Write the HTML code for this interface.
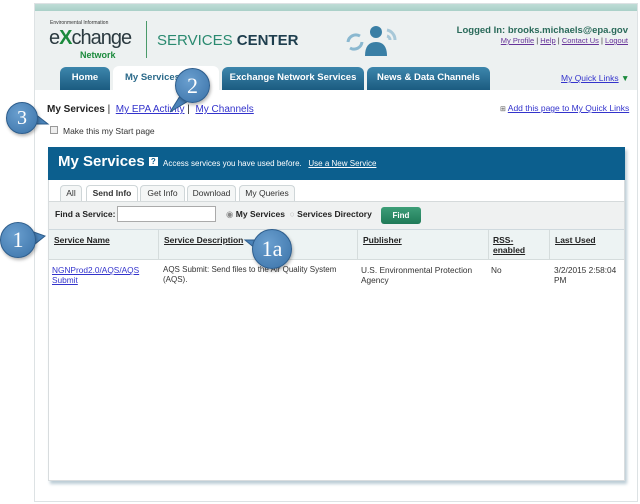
<!DOCTYPE html>
<html><head><style>
*{margin:0;padding:0;box-sizing:border-box}
body{width:640px;height:504px;background:#fff;font-family:"Liberation Sans",Arial,sans-serif;position:relative;overflow:hidden}
.abs{position:absolute}
a{color:#3333cc;text-decoration:underline}
.tab{position:absolute;top:67px;height:23px;border-radius:6px 6px 0 0;background:linear-gradient(#3d86ac,#1b5b80);color:#fff;font-weight:bold;font-size:9.5px;text-align:center;line-height:22px}
.st{position:absolute;top:185px;height:16px;border:1px solid #cfd6d8;border-bottom:none;border-radius:4px 4px 0 0;background:#f4f6f6;font-size:8.5px;text-align:center;line-height:15px;color:#333}
.th{position:absolute;top:235px;font-size:8.5px;font-weight:bold;color:#222;text-decoration:underline}
.td{position:absolute;top:265px;font-size:8.3px;color:#333;line-height:10px;white-space:nowrap}
.call{position:absolute;border-radius:50%;background:radial-gradient(circle at 40% 35%,#6a9fcf,#3a72a8);border:1.5px solid #2d5d8c;color:#fff;font-family:"Liberation Serif",serif;text-align:center;box-shadow:1px 2px 3px rgba(0,0,0,.3)}
</style></head><body>
<div class="abs" style="left:34px;top:3px;width:604px;height:499px;border:1px solid #dde2e4"></div>
<div class="abs" style="left:35px;top:4px;width:602px;height:7px;background:linear-gradient(#bfdcd6,#a9d0c8)"></div>
<div class="abs" style="left:35px;top:11px;width:602px;height:79px;background:#edf1f1"></div>
<div class="abs" style="left:50px;top:20px;font-size:5px;color:#333">Environmental Information</div>
<div class="abs" style="left:49px;top:27px;font-size:20px;color:#2b3a40;letter-spacing:-1px">e<span style="color:#1b8a3c;font-weight:bold">X</span>change</div>
<div class="abs" style="left:80px;top:50px;font-size:9px;font-weight:bold;color:#1b8a3c">Network</div>
<div class="abs" style="left:146px;top:21px;width:1px;height:37px;background:#4a9a6a"></div>
<div class="abs" style="left:157px;top:32px;font-size:15px;color:#2a8a70">SERVICES <b style="color:#1e3e4e">CENTER</b></div>
<svg class="abs" style="left:340px;top:22px" width="60" height="36"><path d="M8 20a8 8 0 0 1 12-6M22 20a8 8 0 0 1-12 6" stroke="#8ab8d0" stroke-width="3" fill="none"/><circle cx="36" cy="10" r="6" fill="#3a7fa5"/><path d="M25 34q0-14 11-14t11 14z" fill="#3a7fa5"/><path d="M47 8a10 10 0 0 1 8 10M47 14a4 4 0 0 1 3 4" stroke="#a8c8d8" stroke-width="3" fill="none"/></svg>
<div class="abs" style="right:12px;top:25px;font-size:9.5px;font-weight:bold;color:#2a6a5a">Logged In: brooks.michaels@epa.gov</div>
<div class="abs" style="right:12px;top:36px;font-size:7.5px;color:#333"><a style="color:#663399">My Profile</a> | <a style="color:#663399">Help</a> | <a style="color:#663399">Contact Us</a> | <a style="color:#663399">Logout</a></div>
<div class="tab" style="left:60px;width:50px">Home</div>
<div class="abs" style="left:113px;top:66px;width:106px;height:25px;background:#fff;border-radius:6px 6px 0 0;font-size:9.5px;font-weight:bold;color:#2b6a8a;padding:6px 0 0 12px">My Services</div>
<div class="tab" style="left:222px;width:142px">Exchange Network Services</div>
<div class="tab" style="left:367px;width:123px">News &amp; Data Channels</div>
<div class="abs" style="left:561px;top:73px;font-size:8.5px"><a>My Quick Links</a> <span style="color:#1b8a3c">▼</span></div>
<div class="abs" style="left:47px;top:104px;font-size:10px;color:#222"><b>My Services</b> | &nbsp;<a>My EPA Activity</a> | &nbsp;<a>My Channels</a></div>
<div class="abs" style="left:500px;top:103px;font-size:8.5px"><span style="font-size:7px;color:#555">⊞</span> <a>Add this page to My Quick Links</a></div>
<div class="abs" style="left:50px;top:126px;width:8px;height:8px;border:1px solid #999;background:#eee"></div>
<div class="abs" style="left:63px;top:126px;font-size:8.5px;color:#333">Make this my Start page</div>
<div class="abs" style="left:48px;top:147px;width:577px;height:334px;border:1px solid #d8dcde;box-shadow:2px 3px 3px #bccdd6;background:#fff"></div>
<div class="abs" style="left:48px;top:147px;width:577px;height:33px;background:#0c5f8e"></div>
<div class="abs" style="left:58px;top:153px;font-size:15px;font-weight:bold;color:#fff">My Services <span style="font-size:8px;background:#fff;color:#0c5f8e;padding:0 2px;vertical-align:2px">?</span></div>
<div class="abs" style="left:163px;top:159px;font-size:8px;color:#fff">Access services you have used before. &nbsp;&nbsp;<u>Use a New Service</u></div>
<div class="st" style="left:60px;width:22px">All</div>
<div class="st" style="left:86px;width:52px;background:#fff;font-weight:bold">Send Info</div>
<div class="st" style="left:140px;width:45px">Get Info</div>
<div class="st" style="left:187px;width:49px">Download</div>
<div class="st" style="left:239px;width:56px">My Queries</div>
<div class="abs" style="left:49px;top:201px;width:575px;height:29px;background:#eff1f1;border-top:1px solid #d5dadb;border-bottom:1px solid #cfd9de"></div>
<div class="abs" style="left:55px;top:209px;font-size:8.5px;font-weight:bold;color:#222">Find a Service:</div>
<div class="abs" style="left:117px;top:206px;width:99px;height:16px;border:1px solid #aaa;background:#fff"></div>
<div class="abs" style="left:226px;top:209px;font-size:8.5px;font-weight:bold;color:#222;white-space:nowrap"><span style="color:#888;font-weight:normal">◉</span> My Services &nbsp;<span style="color:#bbb;font-weight:normal">○</span> Services Directory</div>
<div class="abs" style="left:381px;top:207px;width:40px;height:17px;background:linear-gradient(#3d9e78,#1f7a58);border-radius:3px;color:#fff;font-size:8px;font-weight:bold;text-align:center;line-height:17px">Find</div>
<div class="abs" style="left:49px;top:230px;width:575px;height:30px;background:#edf3f3;border-bottom:1px solid #d5dcdc"></div>
<div class="abs" style="left:158px;top:230px;width:1px;height:30px;background:#d5dcdc"></div>
<div class="abs" style="left:357px;top:230px;width:1px;height:30px;background:#d5dcdc"></div>
<div class="abs" style="left:488px;top:230px;width:1px;height:30px;background:#d5dcdc"></div>
<div class="abs" style="left:549px;top:230px;width:1px;height:30px;background:#d5dcdc"></div>
<div class="th" style="left:54px">Service Name</div>
<div class="th" style="left:164px">Service Description</div>
<div class="th" style="left:363px">Publisher</div>
<div class="th" style="left:493px;line-height:10px">RSS-<br>enabled</div>
<div class="th" style="left:555px">Last Used</div>
<div class="td" style="left:52px"><a>NGNProd2.0/AQS/AQS<br>Submit</a></div>
<div class="td" style="left:163px;font-size:8px">AQS Submit: Send files to the Air Quality System<br>(AQS).</div>
<div class="td" style="left:361px">U.S. Environmental Protection<br>Agency</div>
<div class="td" style="left:491px">No</div>
<div class="td" style="left:554px">3/2/2015 2:58:04<br>PM</div>
<svg class="abs" style="left:0;top:0" width="640" height="504"><g fill="#4a82b8" stroke="#2d5d8c"><path d="M30 110L48 124L34 124z"/><path d="M180 96L170 112L190 100z"/><path d="M28 230L45 236L30 248z"/><path d="M262 240L245 240L262 254z"/></g></svg>
<div class="call" style="left:6px;top:102px;width:32px;height:32px;font-size:20px;line-height:30px">3</div>
<div class="call" style="left:175px;top:68px;width:35px;height:35px;font-size:22px;line-height:33px">2</div>
<div class="call" style="left:0px;top:222px;width:36px;height:36px;font-size:22px;line-height:34px">1</div>
<div class="call" style="left:252px;top:229px;width:40px;height:40px;font-size:22px;line-height:38px">1a</div>
</body></html>
